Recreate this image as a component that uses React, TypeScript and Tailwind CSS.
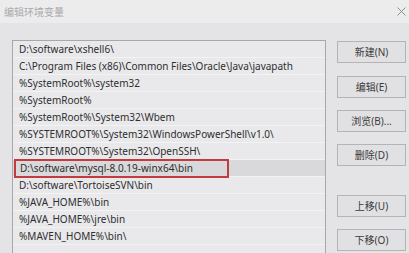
const paths = [
  "D:\\software\\xshell6\\",
  "C:\\Program Files (x86)\\Common Files\\Oracle\\Java\\javapath",
  "%SystemRoot%\\system32",
  "%SystemRoot%",
  "%SystemRoot%\\System32\\Wbem",
  "%SYSTEMROOT%\\System32\\WindowsPowerShell\\v1.0\\",
  "%SYSTEMROOT%\\System32\\OpenSSH\\",
  "D:\\software\\mysql-8.0.19-winx64\\bin",
  "D:\\software\\TortoiseSVN\\bin",
  "%JAVA_HOME%\\bin",
  "%JAVA_HOME%\\jre\\bin",
  "%MAVEN_HOME%\\bin\\",
];

function Btn({ label, className = "" }: { label: string; className?: string }) {
  return (
    <button
      className={`h-[22px] w-[69px] border border-[#b4b4b6] bg-[#e1e1e3] text-[10px] text-[#3a3a3a] ${className}`}
    >
      {label}
    </button>
  );
}

export default function App() {
  return (
    <div
      className="w-[409px] h-[253px] overflow-hidden bg-[#e4e4e6]"
      style={{ fontFamily: '"Noto Sans", "Noto Sans CJK SC", sans-serif' }}
    >
      <div className="h-[23px] bg-[#ececed] flex items-center justify-between pl-[4px] pr-[2px]">
        <span className="text-[10px] text-[#a9a9ab] leading-none">编辑环境变量</span>
        <svg width="9" height="9" viewBox="0 0 9 9" className="mr-[1px]">
          <path d="M0.5 0.5 L8.5 8.5 M8.5 0.5 L0.5 8.5" stroke="#8c8c8e" strokeWidth="1" />
        </svg>
      </div>
      <div className="flex pl-[12px] pt-[17px]">
        <div className="w-[314px] h-[240px] border border-[#a8a8aa] bg-[#e9e9eb]">
          {paths.map((p, i) => (
            <div
              key={i}
              className={`h-[17px] flex items-center pl-[6px] text-[10px] text-[#2e2e2e] whitespace-nowrap border-b border-[#f3f3f4] ${
                i === 7 ? "bg-[#d9d9db]" : ""
              }`}
            >
              {i === 7 ? (
                <span className="-ml-[5px] pl-[4px] pr-[4px] h-[19px] w-[215px] flex items-center border-2 border-[#c23b3e]">
                  {p}
                </span>
              ) : (
                p
              )}
            </div>
          ))}
        </div>
        <div className="ml-[11px] flex flex-col">
          <Btn label="新建(N)" className="mt-[1px]" />
          <Btn label="编辑(E)" className="mt-[13px]" />
          <Btn label="浏览(B)..." className="mt-[12px]" />
          <Btn label="删除(D)" className="mt-[12px]" />
          <Btn label="上移(U)" className="mt-[29px]" />
          <Btn label="下移(O)" className="mt-[12px]" />
        </div>
      </div>
    </div>
  );
}
